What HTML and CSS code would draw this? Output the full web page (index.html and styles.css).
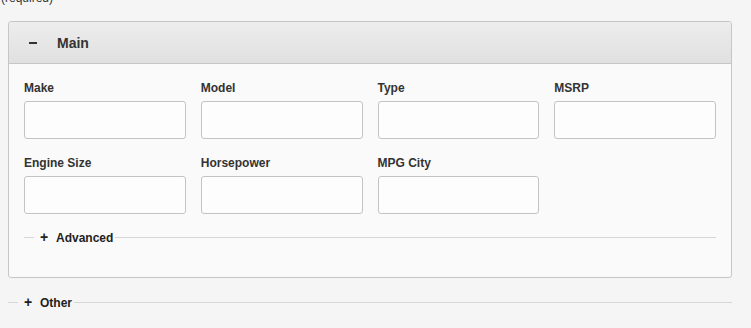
FILE: index.html
```html
<!DOCTYPE html>
<html lang="en">
<head>
    <meta charset="UTF-8">
    <meta name="viewport" content="width=device-width, initial-scale=1.0">
    <title>Car form</title>
    <link rel="stylesheet" href="styles.css">
</head>
<body>
    <div class="required-note">(required)</div>

    <div class="panel">
        <div class="panel-header">
            <span class="toggle"></span>
            <span class="panel-title">Main</span>
        </div>
        <div class="panel-body">
            <div class="field-grid">
                <div class="field">
                    <label for="make">Make</label>
                    <input type="text" id="make">
                </div>
                <div class="field">
                    <label for="model">Model</label>
                    <input type="text" id="model">
                </div>
                <div class="field">
                    <label for="type">Type</label>
                    <input type="text" id="type">
                </div>
                <div class="field">
                    <label for="msrp">MSRP</label>
                    <input type="text" id="msrp">
                </div>
                <div class="field">
                    <label for="engine">Engine Size</label>
                    <input type="text" id="engine">
                </div>
                <div class="field">
                    <label for="hp">Horsepower</label>
                    <input type="text" id="hp">
                </div>
                <div class="field">
                    <label for="mpg">MPG City</label>
                    <input type="text" id="mpg">
                </div>
            </div>

            <fieldset class="group">
                <legend><span class="plus">+</span>Advanced</legend>
            </fieldset>
        </div>
    </div>

    <fieldset class="group group-outer">
        <legend><span class="plus">+</span>Other</legend>
    </fieldset>
</body>
</html>
```

FILE: styles.css
```css
* {
    margin: 0;
    padding: 0;
    box-sizing: border-box;
}

body {
    font-family: 'Liberation Sans', Arial, sans-serif;
    background: #f5f5f5;
    color: #333;
    overflow: hidden;
}

.required-note {
    font-size: 12px;
    line-height: 14px;
    margin-top: -9px;
    padding-left: 1px;
    color: #333;
}

.panel {
    margin: 16px 19px 0 8px;
    border: 1px solid #c6c6c6;
    border-radius: 3px;
    background: #fafafa;
}

.panel-header {
    height: 42px;
    display: flex;
    align-items: center;
    padding-left: 20px;
    background: linear-gradient(to bottom, #ededed 0%, #e0e0e0 100%);
    border-bottom: 1px solid #c6c6c6;
    border-radius: 3px 3px 0 0;
    font-weight: bold;
    font-size: 14px;
    color: #333;
}

.toggle {
    width: 8px;
    height: 2px;
    background: #333;
    margin: 1px 20px 0 0;
}

.panel-body {
    padding: 17px 15px 15px;
}

.field-grid {
    display: grid;
    grid-template-columns: repeat(4, 1fr);
    column-gap: 15px;
    row-gap: 17px;
}

.field label {
    display: block;
    font-size: 12px;
    line-height: 14px;
    font-weight: bold;
    color: #333;
    margin-bottom: 6px;
}

.field input {
    display: block;
    width: 100%;
    height: 38px;
    border: 1px solid #c3c3c3;
    border-radius: 3px;
    background: #fdfdfd;
    font-family: inherit;
}

.group {
    border: 0;
    border-top: 1px solid #d6d6d6;
    margin-top: 16px;
    padding: 0 0 17px 10px;
    min-width: 0;
}

.group legend {
    font-size: 12px;
    font-weight: bold;
    line-height: 14px;
    color: #222;
    padding: 0 2px 0 6px;
}

.plus {
    display: inline-block;
    font-size: 14px;
    width: 16px;
}

.group-outer {
    margin: 17px 19px 0 8px;
}
```
